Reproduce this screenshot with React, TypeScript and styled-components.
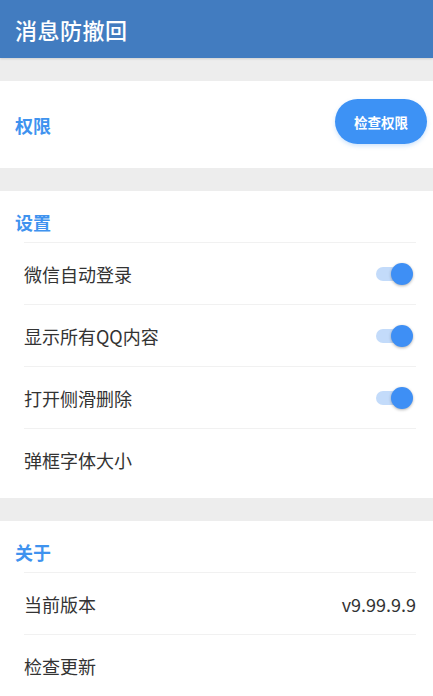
import React, { useState } from 'react';
import styled, { createGlobalStyle } from 'styled-components';

const GlobalStyle = createGlobalStyle`
  html, body {
    margin: 0;
    padding: 0;
    background: #ededed;
    font-family: 'Noto Sans CJK SC', 'Noto Sans', Roboto, sans-serif;
  }
`;

const settingItems = [
  { key: 'wechat', label: '微信自动登录', toggle: true },
  { key: 'qq', label: '显示所有QQ内容', toggle: true },
  { key: 'swipe', label: '打开侧滑删除', toggle: true },
  { key: 'font', label: '弹框字体大小', toggle: false },
];

export default function App() {
  const [toggles, setToggles] = useState<Record<string, boolean>>({
    wechat: true,
    qq: true,
    swipe: true,
  });

  const flip = (key: string) => setToggles(prev => ({ ...prev, [key]: !prev[key] }));

  return (
    <Page>
      <GlobalStyle />
      <AppBar>
        <AppTitle>消息防撤回</AppTitle>
      </AppBar>

      <PermissionCard>
        <SectionTitle>权限</SectionTitle>
        <CheckButton type="button">检查权限</CheckButton>
      </PermissionCard>

      <Card>
        <SectionHeader>
          <SectionTitle>设置</SectionTitle>
        </SectionHeader>
        <List>
          {settingItems.map(item => (
            <Row key={item.key}>
              <RowLabel>{item.label}</RowLabel>
              {item.toggle && (
                <Switch $on={toggles[item.key]} onClick={() => flip(item.key)}>
                  <Track $on={toggles[item.key]} />
                  <Thumb $on={toggles[item.key]} />
                </Switch>
              )}
            </Row>
          ))}
        </List>
      </Card>

      <Card>
        <SectionHeader>
          <SectionTitle>关于</SectionTitle>
        </SectionHeader>
        <List>
          <Row>
            <RowLabel>当前版本</RowLabel>
            <RowValue>v9.99.9.9</RowValue>
          </Row>
          <Row>
            <RowLabel>检查更新</RowLabel>
          </Row>
        </List>
      </Card>
    </Page>
  );
}

const Page = styled.div`
  width: 100%;
  min-height: 100vh;
  background: #ededed;
  display: flex;
  flex-direction: column;
  gap: 23px;
  overflow: hidden;
`;

const AppBar = styled.header`
  height: 58px;
  background: #427cc0;
  display: flex;
  align-items: center;
  padding: 0 15px;
  box-shadow: 0 1px 2px rgba(0, 0, 0, 0.12);
`;

const AppTitle = styled.h1`
  margin: 0;
  color: #ffffff;
  font-size: 22px;
  font-weight: 500;
  letter-spacing: 0.5px;
`;

const Card = styled.section`
  background: #ffffff;
  padding-bottom: 8px;
`;

const PermissionCard = styled.section`
  background: #ffffff;
  height: 87px;
  display: flex;
  align-items: center;
  justify-content: space-between;
  padding: 0 6px 0 15px;
  box-sizing: border-box;
`;

const SectionHeader = styled.div`
  padding: 20px 15px 9px;
`;

const SectionTitle = styled.h2`
  margin: 0;
  color: #3f93ef;
  font-size: 18px;
  font-weight: 700;
  line-height: 22px;
`;

const CheckButton = styled.button`
  width: 92px;
  height: 45px;
  margin-top: -6px;
  border: none;
  border-radius: 23px;
  background: #3d92f5;
  color: #ffffff;
  font-family: inherit;
  font-size: 13.5px;
  font-weight: 700;
  box-shadow: 0 2px 4px rgba(61, 146, 245, 0.25);
`;

const List = styled.div`
  margin: 0 17px 0 24px;
`;

const Row = styled.div`
  height: 61px;
  border-top: 1px solid #f1f1f1;
  display: flex;
  align-items: center;
  justify-content: space-between;
`;

const RowLabel = styled.span`
  color: #333333;
  font-size: 18px;
`;

const RowValue = styled.span`
  color: #333333;
  font-size: 18px;
`;

const Switch = styled.div<{ $on?: boolean }>`
  position: relative;
  width: 38px;
  height: 24px;
  margin-right: 2px;
  cursor: pointer;
`;

const Track = styled.div<{ $on?: boolean }>`
  position: absolute;
  left: 0;
  right: 2px;
  top: 5px;
  height: 14px;
  border-radius: 7px;
  background: ${p => (p.$on ? '#c3dbfa' : '#d0d0d0')};
`;

const Thumb = styled.div<{ $on?: boolean }>`
  position: absolute;
  top: 1px;
  left: ${p => (p.$on ? '15px' : '0')};
  width: 22px;
  height: 22px;
  border-radius: 50%;
  background: ${p => (p.$on ? '#3e8ff5' : '#fafafa')};
  box-shadow: 0 1px 3px rgba(0, 0, 0, 0.3);
`;
